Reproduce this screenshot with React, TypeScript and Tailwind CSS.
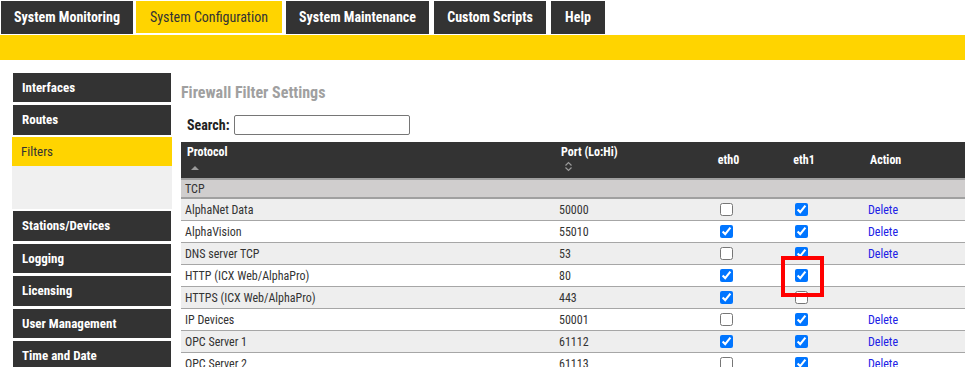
import React from "react";

type Row = { name: string; port: string; e0: boolean; e1: boolean; del: boolean };

const rows: Row[] = [
  { name: "AlphaNet Data", port: "50000", e0: false, e1: true, del: true },
  { name: "AlphaVision", port: "55010", e0: true, e1: true, del: true },
  { name: "DNS server TCP", port: "53", e0: false, e1: true, del: true },
  { name: "HTTP (ICX Web/AlphaPro)", port: "80", e0: true, e1: true, del: false },
  { name: "HTTPS (ICX Web/AlphaPro)", port: "443", e0: true, e1: false, del: false },
  { name: "IP Devices", port: "50001", e0: false, e1: true, del: true },
  { name: "OPC Server 1", port: "61112", e0: true, e1: true, del: true },
  { name: "OPC Server 2", port: "61113", e0: false, e1: true, del: true },
];

const grid = "grid grid-cols-[374px_132px_78px_73px_1fr]";

function DarkItem({ label, h }: { label: string; h: string }) {
  return (
    <div className={`mx-px ${h} bg-[#333333] text-white font-bold text-[13px] flex items-center pl-[9px]`}>
      {label}
    </div>
  );
}

export default function App() {
  return (
    <div className="w-[965px] h-[367px] overflow-hidden bg-white font-['Roboto_Condensed','Roboto',sans-serif] text-[#333]">
      {/* Top nav */}
      <div className="flex h-[35px] pt-px text-[14px]">
        <div className="ml-px w-[132px] h-[33px] bg-[#333333] text-white font-bold flex items-center justify-center">
          System Monitoring
        </div>
        <div className="ml-[3px] w-[146px] h-[32px] bg-[#ffd400] text-[#333] flex items-center justify-center">
          System Configuration
        </div>
        <div className="ml-[4px] w-[143px] h-[33px] bg-[#333333] text-white font-bold flex items-center justify-center">
          System Maintenance
        </div>
        <div className="ml-[5px] w-[112px] h-[33px] bg-[#333333] text-white font-bold flex items-center justify-center">
          Custom Scripts
        </div>
        <div className="ml-[5px] w-[54px] h-[33px] bg-[#333333] text-white font-bold flex items-center justify-center">
          Help
        </div>
      </div>
      <div className="h-[25px] bg-[#ffd400]" />

      <div className="flex pt-[13px] pl-[12px]">
        {/* Sidebar */}
        <nav className="w-[160px] shrink-0 flex flex-col">
          <DarkItem label="Interfaces" h="h-[29px]" />
          <div className="h-[3px]" />
          <DarkItem label="Routes" h="h-[30px]" />
          <div className="h-[2px]" />
          <div className="h-[29px] bg-[#ffd400] text-[#333] text-[13px] flex items-center pl-[9px]">Filters</div>
          <div className="h-[43px] bg-[#f0f0f0]" />
          <div className="h-[2px]" />
          <DarkItem label="Stations/Devices" h="h-[30px]" />
          <div className="h-[3px]" />
          <DarkItem label="Logging" h="h-[29px]" />
          <div className="h-[3px]" />
          <DarkItem label="Licensing" h="h-[30px]" />
          <div className="h-[3px]" />
          <DarkItem label="User Management" h="h-[29px]" />
          <div className="h-[3px]" />
          <DarkItem label="Time and Date" h="h-[30px]" />
        </nav>

        {/* Main */}
        <main className="ml-[9px] flex-1 relative">
          <h1 className="mt-[10px] h-[20px] leading-[20px] text-[16px] font-bold text-[#a0a0a0]">Firewall Filter Settings</h1>
          <div className="mt-[12px] flex items-center h-[20px] pl-[6px]">
            <span className="text-[14px] font-bold text-[#222]">Search:</span>
            <input
              type="text"
              className="ml-[4px] w-[176px] h-[20px] border border-[#767676] rounded-[2px] bg-white outline-none"
            />
          </div>

          {/* Table */}
          <div className="mt-[7px] text-[12px]">
            <div className={`${grid} h-[36px] bg-[#333333] text-white font-bold border-b-2 border-[#a0a0a0] box-content`}>
              <div className="pl-[6px] pt-[3px] leading-[14px]">
                <div>Protocol</div>
                <svg width="8" height="6" viewBox="0 0 8 6" className="mt-[6px] ml-[4px]">
                  <path d="M0 5 L4 1 L8 5 Z" fill="#9a9a9a" />
                </svg>
              </div>
              <div className="pl-[6px] pt-[3px] leading-[14px]">
                <div>Port (Lo:Hi)</div>
                <svg width="9" height="11" viewBox="0 0 9 11" className="mt-[2px] ml-[3px]">
                  <path d="M1.5 4.5 L4.5 1.5 L7.5 4.5" stroke="#9a9a9a" strokeWidth="1.2" fill="none" />
                  <path d="M1.5 6.5 L4.5 9.5 L7.5 6.5" stroke="#9a9a9a" strokeWidth="1.2" fill="none" />
                </svg>
              </div>
              <div className="flex items-center justify-center pl-[5px]">eth0</div>
              <div className="flex items-center justify-center pl-[5px]">eth1</div>
              <div className="flex items-center pl-[32px]">Action</div>
            </div>
            <div className="h-[17px] bg-[#d0cece] border-b-2 border-[#a0a0a0] box-content flex items-center pl-[4px]">
              TCP
            </div>
            {rows.map((r, i) => (
              <div
                key={r.name}
                className={`${grid} h-[21px] border-b border-[#a6a6a6] box-content items-center ${
                  i % 2 === 0 ? "bg-[#eeeeee]" : "bg-white"
                }`}
              >
                <div className="pl-[4px]">{r.name}</div>
                <div className="pl-[4px]">{r.port}</div>
                <div className="flex justify-center">
                  <input type="checkbox" defaultChecked={r.e0} className="m-0 w-[13px] h-[13px]" />
                </div>
                <div className="flex justify-center">
                  <input type="checkbox" defaultChecked={r.e1} className="m-0 w-[13px] h-[13px]" />
                </div>
                <div className="pl-[30px]">
                  {r.del && <span className="text-[#2020e6]">Delete</span>}
                </div>
              </div>
            ))}
          </div>

          {/* Annotation highlight */}
          <div className="absolute left-[600px] top-[183px] w-[43px] h-[41px] border-4 border-[#ff0000]" />
        </main>
      </div>
    </div>
  );
}
